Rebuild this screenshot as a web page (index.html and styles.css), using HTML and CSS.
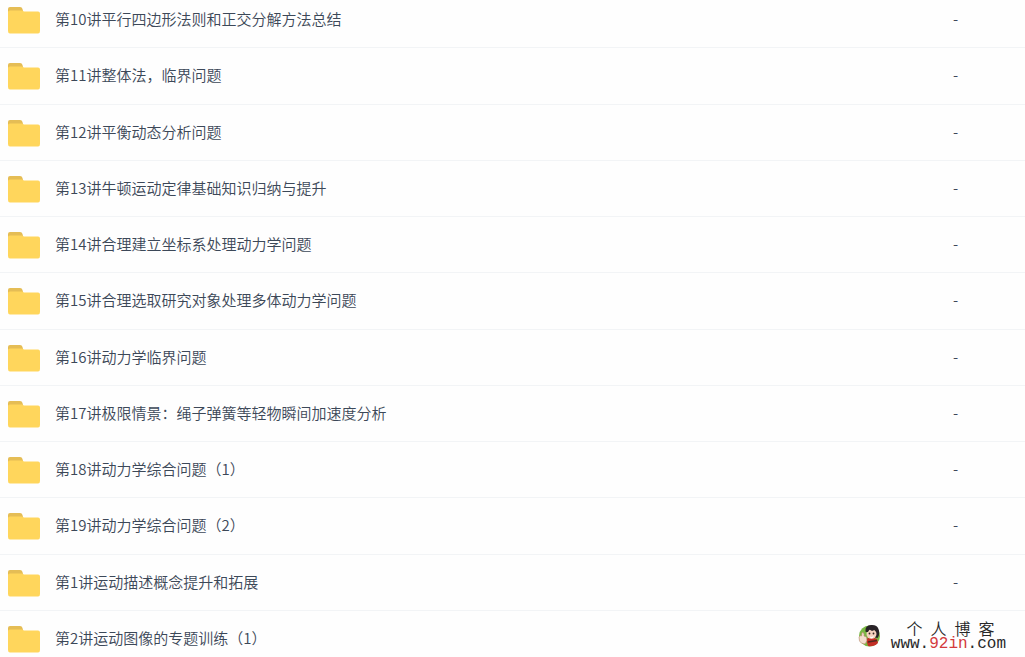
FILE: index.html
```html
<!DOCTYPE html>
<html lang="zh-CN">
<head>
<meta charset="utf-8">
<meta name="viewport" content="width=device-width, initial-scale=1">
<title>文件列表</title>
<link rel="stylesheet" href="styles.css">
</head>
<body>
<svg class="symbols" aria-hidden="true">
  <symbol id="folder" viewBox="0 0 32 27">
    <path d="M0 8V2Q0 0 2 0H12Q14 0 14.500 2L15 4V8Z" fill="#e5bd55"/>
    <path d="M0 5Q0 3.500 2 3.500H14L16 4.500H30Q32 4.500 32 6.500V24Q32 26.500 30 26.500H2Q0 26.500 0 24Z" fill="#ffd65c"/>
  </symbol>
</svg>
<main class="viewport">
  <table class="files">
    <tbody>
      <tr><td class="name"><a href="#"><svg class="icon"><use href="#folder"/></svg><span>第10讲平行四边形法则和正交分解方法总结</span></a></td><td class="size">-</td></tr>
      <tr><td class="name"><a href="#"><svg class="icon"><use href="#folder"/></svg><span>第11讲整体法，临界问题</span></a></td><td class="size">-</td></tr>
      <tr><td class="name"><a href="#"><svg class="icon"><use href="#folder"/></svg><span>第12讲平衡动态分析问题</span></a></td><td class="size">-</td></tr>
      <tr><td class="name"><a href="#"><svg class="icon"><use href="#folder"/></svg><span>第13讲牛顿运动定律基础知识归纳与提升</span></a></td><td class="size">-</td></tr>
      <tr><td class="name"><a href="#"><svg class="icon"><use href="#folder"/></svg><span>第14讲合理建立坐标系处理动力学问题</span></a></td><td class="size">-</td></tr>
      <tr><td class="name"><a href="#"><svg class="icon"><use href="#folder"/></svg><span>第15讲合理选取研究对象处理多体动力学问题</span></a></td><td class="size">-</td></tr>
      <tr><td class="name"><a href="#"><svg class="icon"><use href="#folder"/></svg><span>第16讲动力学临界问题</span></a></td><td class="size">-</td></tr>
      <tr><td class="name"><a href="#"><svg class="icon"><use href="#folder"/></svg><span>第17讲极限情景：绳子弹簧等轻物瞬间加速度分析</span></a></td><td class="size">-</td></tr>
      <tr><td class="name"><a href="#"><svg class="icon"><use href="#folder"/></svg><span>第18讲动力学综合问题（1）</span></a></td><td class="size">-</td></tr>
      <tr><td class="name"><a href="#"><svg class="icon"><use href="#folder"/></svg><span>第19讲动力学综合问题（2）</span></a></td><td class="size">-</td></tr>
      <tr><td class="name"><a href="#"><svg class="icon"><use href="#folder"/></svg><span>第1讲运动描述概念提升和拓展</span></a></td><td class="size">-</td></tr>
      <tr><td class="name"><a href="#"><svg class="icon"><use href="#folder"/></svg><span>第2讲运动图像的专题训练（1）</span></a></td><td class="size"></td></tr>
    </tbody>
  </table>
  <div class="watermark">
    <svg class="avatar" viewBox="0 0 24 24" aria-hidden="true">
      <circle cx="12.500" cy="12" r="10.500" fill="#79b843"/>
      <path d="M9 15Q14 12 20 15L21 19Q17 23 11 22Z" fill="#c32f25"/>
      <path d="M11 18L20 16.500" stroke="#512a20" stroke-width="1.500"/>
      <path d="M8.500 7Q8 1.500 14 1Q20 .500 21.500 5Q23.500 10 20.500 14L16 13Z" fill="#292327"/>
      <ellipse cx="14.500" cy="10" rx="5" ry="4.800" fill="#f5d1bd"/>
      <path d="M8.500 8Q10 2 15 3Q20 3 20.500 9L17.500 6L15 7L12.500 5.500L11 8Z" fill="#292327"/>
      <circle cx="12.500" cy="9.500" r=".9" fill="#342622"/>
      <circle cx="16.500" cy="9.500" r=".9" fill="#342622"/>
      <path d="M12.500 12Q14.500 14 17 11.500Q16 15 13.500 14Z" fill="#fff"/>
      <path d="M2 13Q3 11 4.500 12L5 8.500Q7.500 8 7 12L9.500 13Q11 17 8 20Q4 20 2.500 17Z" fill="#f3dfcf" stroke="#b9866b" stroke-width=".6"/>
    </svg>
    <div class="brand">
      <span class="title">个人博客</span>
      <span class="address">www.<span class="accent">92in</span>.com</span>
    </div>
  </div>
</main>
</body>
</html>
```
FILE: styles.css
```css
* { box-sizing: border-box; }

body {
  margin: 0;
  background: #fefefe;
  color: #3c4858;
  font: 350 15px/24px "Noto Sans CJK SC", sans-serif;
}

.symbols { position: absolute; width: 0; height: 0; }

.viewport {
  position: relative;
  height: 100vh;
  overflow: hidden;
}

/* The list is scrolled a little past its first row's top edge. */
.files {
  width: 100%;
  margin-top: -8px;
  border-collapse: separate;
  border-spacing: 0;
}

.files td {
  height: 56px;
  padding: 0;
  border-bottom: 1px solid #f2f4f6;
  vertical-align: middle;
}

.files tr:nth-child(4n + 2) td { height: 57px; }

.name a {
  display: flex;
  align-items: flex-start;
  gap: 15px;
  padding: 1px 0 0 8px;
  color: inherit;
  text-decoration: none;
}

.icon { flex: none; width: 32px; height: 27px; }

.files .size { width: 72px; padding-bottom: 2px; }

.watermark {
  position: absolute;
  right: 19px;
  bottom: 5px;
  display: flex;
  align-items: center;
  gap: 10px;
  color: #282828;
}

.avatar { width: 24px; height: 24px; }

.brand {
  display: flex;
  flex-direction: column;
  align-items: center;
}

.title {
  width: 88px;
  margin-left: 4px;
  font-size: 16px;
  font-weight: 350;
  line-height: 16px;
  text-align-last: justify;
}

.address {
  font: 16px/16px "Liberation Mono", monospace;
}

.accent { color: #d33a3c; }
```
